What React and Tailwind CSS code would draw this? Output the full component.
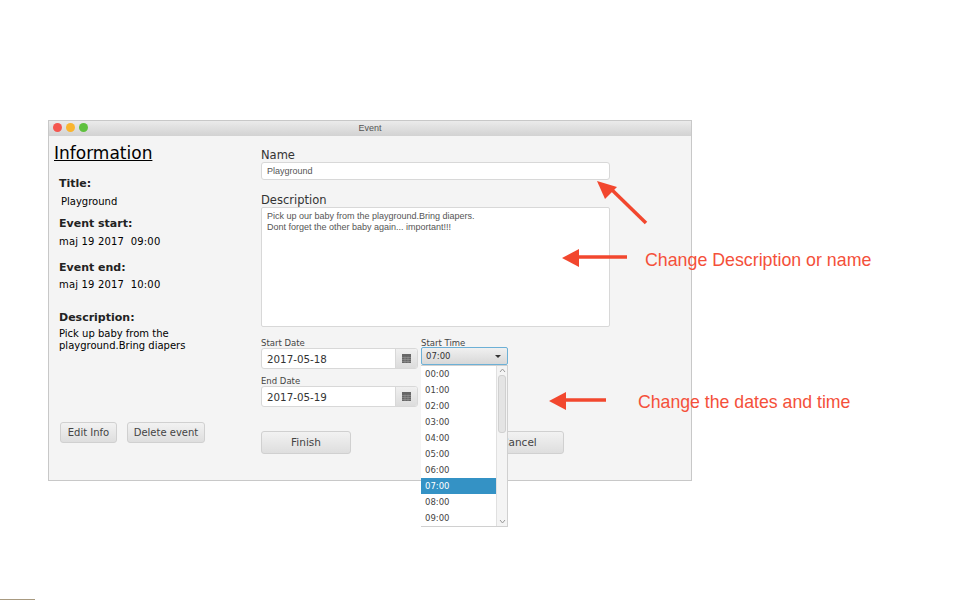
import React from 'react';

const times = ['00:00', '01:00', '02:00', '03:00', '04:00', '05:00', '06:00', '07:00', '08:00', '09:00'];

function CalendarIcon() {
    return (
        <svg width="9" height="9" viewBox="0 0 9 9">
            <rect width="9" height="9" fill="#666" />
            <path d="M0 3.5h9M0 5.5h9M0 7.5h9M3 2.5v6.5M6 2.5v6.5" stroke="#999" strokeWidth="0.6" />
        </svg>
    );
}

function DateField({ value }) {
    return (
        <div className="flex w-[157px] h-[21px] border border-[#d8d8d8] rounded-[3px] bg-white overflow-hidden">
            <div className="flex-1 pl-[5px] text-[10.3px] leading-[20px] text-[#333]">{value}</div>
            <div className="w-[22px] flex items-center justify-center border-l border-[#d8d8d8] bg-gradient-to-b from-[#f0f0f0] to-[#dcdcdc]">
                <CalendarIcon />
            </div>
        </div>
    );
}

function Button({ className, children }) {
    return (
        <button className={`border border-[#d0d0d0] rounded-[3px] bg-gradient-to-b from-[#f2f2f2] to-[#dedede] text-[#444] ${className}`}>
            {children}
        </button>
    );
}

function Arrow({ className, x1, y1, x2, y2, points, w, h }) {
    return (
        <svg className={`absolute ${className}`} width={w} height={h} viewBox={`0 0 ${w} ${h}`}>
            <line x1={x1} y1={y1} x2={x2} y2={y2} stroke="#f2472e" strokeWidth="3.5" />
            <polygon points={points} fill="#f2472e" />
        </svg>
    );
}

export default function App() {
    return (
        <div className="relative w-[960px] h-[600px] bg-white overflow-hidden pt-[120px] pl-[48px] font-['DejaVu_Sans',sans-serif]">
            <div className="w-[644px] h-[361px] border border-[#c8c8c8] bg-[#f4f4f4]">
                {/* title bar */}
                <div className="relative h-[15px] flex items-center justify-center bg-gradient-to-b from-[#ebebeb] to-[#d2d2d2] font-['Liberation_Sans',sans-serif] text-[9px] text-[#555]">
                    <div className="absolute left-[4px] top-[2px] flex gap-[4px]">
                        <span className="w-[9px] h-[9px] rounded-full bg-[#f4564f]" />
                        <span className="w-[9px] h-[9px] rounded-full bg-[#f9b52f]" />
                        <span className="w-[9px] h-[9px] rounded-full bg-[#5fc13f]" />
                    </div>
                    Event
                </div>

                <div className="flex">
                    {/* left column */}
                    <div className="w-[212px] pl-[5px] text-black">
                        <h1 className="mt-[6px] text-[17px] leading-[22px] underline">Information</h1>
                        <div className="pl-[5px]">
                            <div className="mt-[12px] text-[11px] leading-[16px] font-bold text-[#222]">Title:</div>
                            <div className="mt-[2px] pl-[2px] text-[10px] leading-[16px]">Playground</div>
                            <div className="mt-[6px] text-[11px] leading-[16px] font-bold text-[#222]">Event start:</div>
                            <div className="mt-[2px] text-[10px] leading-[16px] tracking-[0.17px] whitespace-pre">maj 19 2017  09:00</div>
                            <div className="mt-[10px] text-[11px] leading-[16px] font-bold text-[#222]">Event end:</div>
                            <div className="mt-[1px] text-[10px] leading-[16px] tracking-[0.17px] whitespace-pre">maj 19 2017  10:00</div>
                            <div className="mt-[17px] text-[11px] leading-[16px] font-bold text-[#222]">Description:</div>
                            <div className="mt-[2px] text-[10px] leading-[12px]">
                                Pick up baby from the<br />playground.Bring diapers
                            </div>
                            <div className="mt-[70px] ml-[1px] flex gap-[10px]">
                                <Button className="w-[57px] h-[21px] text-[10px]">Edit Info</Button>
                                <Button className="w-[78px] h-[21px] text-[10px]">Delete event</Button>
                            </div>
                        </div>
                    </div>

                    {/* right column */}
                    <div className="w-[349px] text-[#333]">
                        <div className="mt-[12px] text-[11.5px] leading-[15px]">Name</div>
                        <div className="h-[18px] mt-[-1px] border border-[#d8d8d8] rounded-[3px] bg-white pl-[5px] font-['Liberation_Sans',sans-serif] text-[9px] leading-[16px] text-[#555]">Playground</div>
                        <div className="mt-[13px] text-[11.5px] leading-[15px]">Description</div>
                        <div className="h-[120px] mt-[-1px] border border-[#d8d8d8] rounded-[2px] bg-white pt-[3px] pl-[5px] font-['Liberation_Sans',sans-serif] text-[9px] leading-[11px] text-[#555]">
                            Pick up our baby from the playground.Bring diapers.<br />
                            Dont forget the other baby again... important!!!
                        </div>

                        <div className="mt-[11px] flex gap-[3px]">
                            <div>
                                <div className="text-[8.5px] leading-[11px] text-[#444]">Start Date</div>
                                <div className="mt-[-1px]">
                                    <DateField value="2017-05-18" />
                                </div>
                                <div className="mt-[7px] text-[8.5px] leading-[11px] text-[#444]">End Date</div>
                                <div className="mt-[-1px]">
                                    <DateField value="2017-05-19" />
                                </div>
                            </div>
                            <div className="relative">
                                <div className="text-[8.5px] leading-[11px] text-[#444]">Start Time</div>
                                <div className="relative mt-[-2px] flex items-center justify-between w-[87px] h-[18px] border border-[#6cb0d6] rounded-[2px] bg-gradient-to-b from-[#f0f0f0] to-[#d8d8d8] px-[4px] text-[8.5px] text-[#333]">
                                    07:00
                                    <span className="mr-[2px] w-0 h-0 border-x-[3px] border-x-transparent border-t-[3px] border-t-[#333]" />
                                </div>
                                {/* open dropdown */}
                                <div className="absolute z-10 left-0 top-[27px] flex w-[87px] h-[162px] border border-l-0 border-[#d0d0d0] bg-white">
                                    <div className="w-[75px]">
                                        {times.map(t => (
                                            <div
                                                key={t}
                                                className={`h-[16px] pl-[4px] text-[8.5px] leading-[16px] ${t === '07:00' ? 'bg-[#3492c5] text-white' : 'text-[#444]'}`}
                                            >
                                                {t}
                                            </div>
                                        ))}
                                    </div>
                                    <div className="relative flex-1 border-l border-[#e0e0e0] bg-[#f4f4f4]">
                                        <div className="absolute left-[1px] top-[9px] w-[8px] h-[58px] rounded-[3px] border border-[#d0d0d0] bg-[#e4e4e4]" />
                                        <svg className="absolute left-[2px] top-[2px]" width="7" height="5" viewBox="0 0 7 5">
                                            <path d="M1 4l2.5-3 2.5 3" fill="none" stroke="#999" />
                                        </svg>
                                        <svg className="absolute left-[2px] bottom-[2px]" width="7" height="5" viewBox="0 0 7 5">
                                            <path d="M1 1l2.5 3 2.5-3" fill="none" stroke="#999" />
                                        </svg>
                                    </div>
                                </div>
                            </div>
                        </div>

                        <div className="mt-[24px] flex justify-between w-[303px]">
                            <Button className="w-[90px] h-[23px] text-[10.5px]">Finish</Button>
                            <Button className="w-[90px] h-[23px] text-[10.5px]">Cancel</Button>
                        </div>
                    </div>
                </div>
            </div>

            {/* annotations */}
            <Arrow className="left-[595px] top-[175px]" w={60} h={55} x1={51} y1={48} x2={14} y2={12} points="2,6 22,12 10,24" />
            <Arrow className="left-[558px] top-[247px]" w={72} h={22} x1={16} y1={10} x2={69} y2={10} points="4,11 21,2 21,20" />
            <Arrow className="left-[546px] top-[390px]" w={62} h={22} x1={16} y1={10} x2={60} y2={10} points="3,11 20,2 20,20" />
            <div className="absolute left-[645px] top-[250px] text-[17.8px] leading-[20px] text-[#f4503a] font-['Liberation_Sans',sans-serif] whitespace-nowrap">Change Description or name</div>
            <div className="absolute left-[638px] top-[392px] text-[17.7px] leading-[20px] text-[#f4503a] font-['Liberation_Sans',sans-serif] whitespace-nowrap">Change the dates and time</div>
            <div className="absolute left-0 bottom-0 w-[35px] h-px bg-[#a89a80]" />
        </div>
    );
}
